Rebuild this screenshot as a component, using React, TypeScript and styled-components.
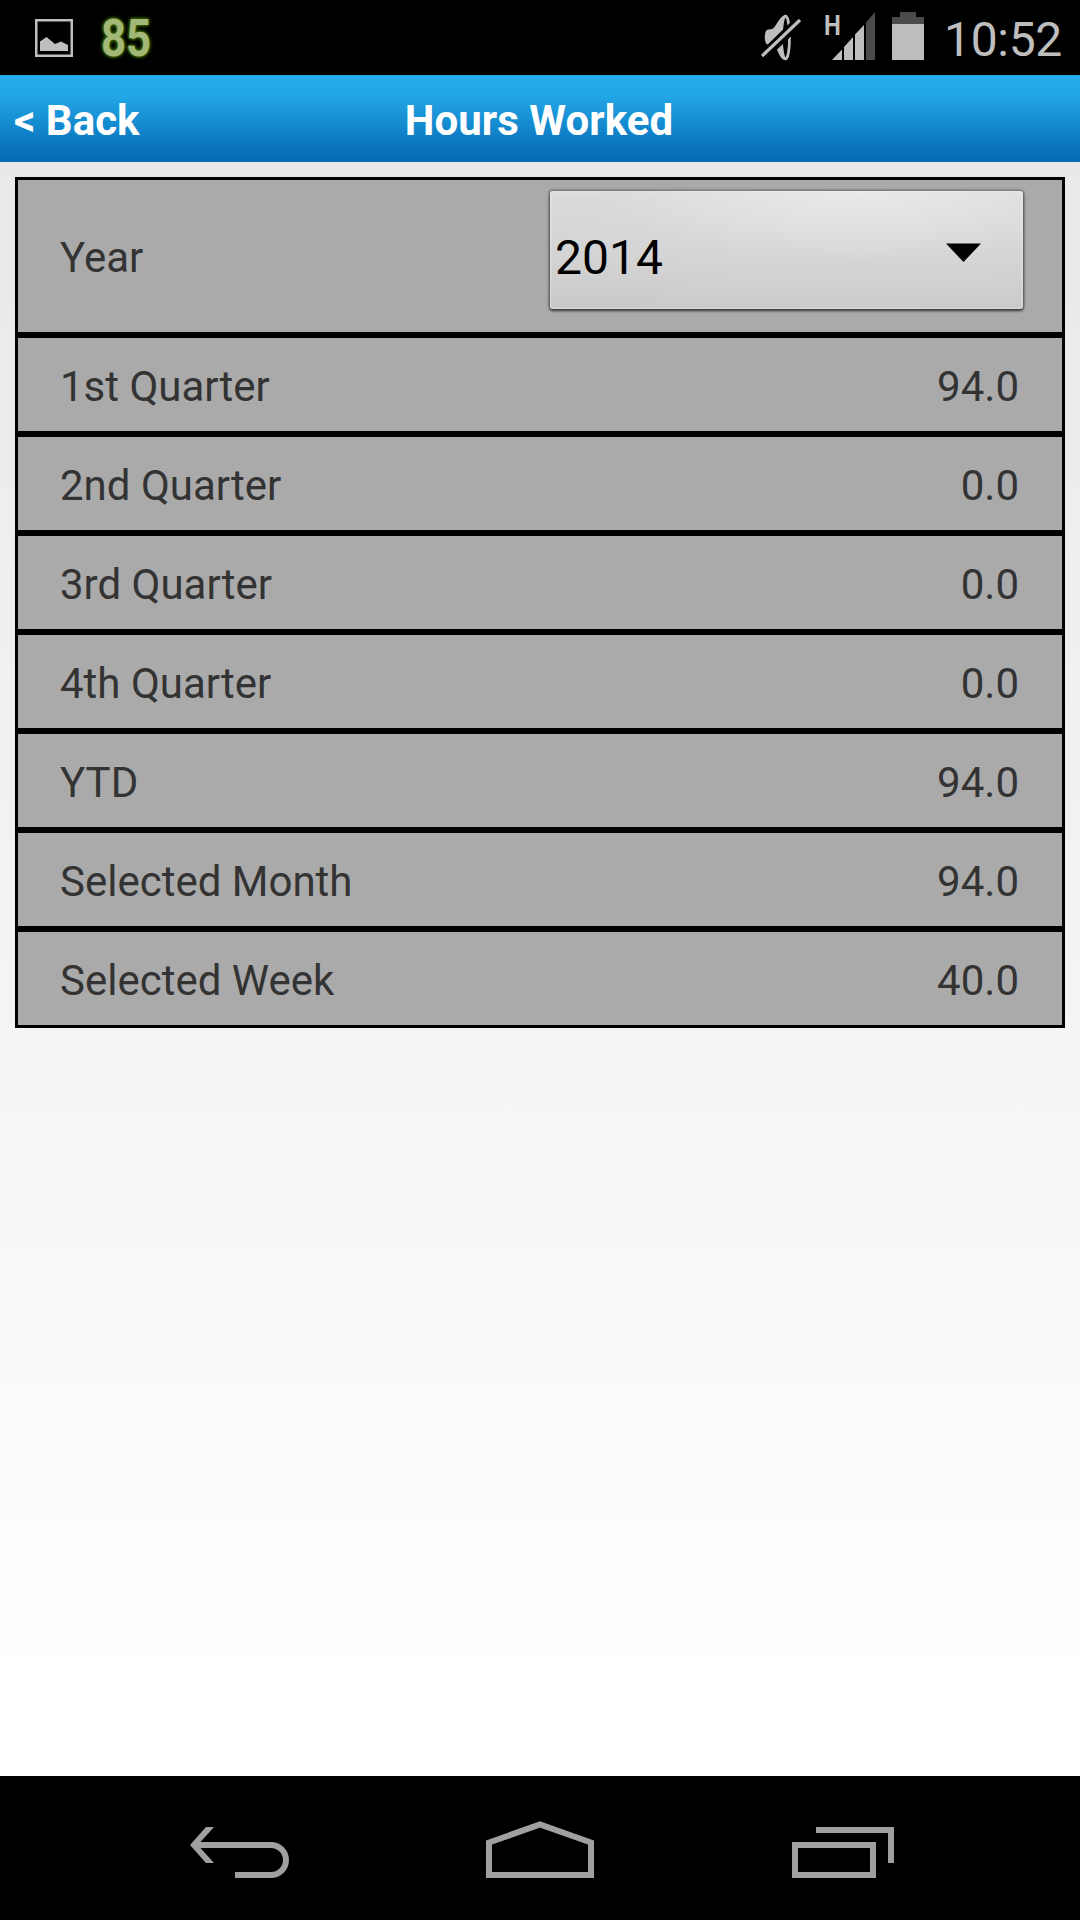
import React from "react";
import styled, { createGlobalStyle } from "styled-components";

const Global = createGlobalStyle`
  body { margin: 0; background: #000; }
  * { box-sizing: border-box; }
`;

const Screen = styled.div`
  display: flex;
  flex-direction: column;
  width: 1080px;
  height: 1920px;
  overflow: hidden;
  font-family: Roboto, "Liberation Sans", sans-serif;
  font-size: 42px;
  color: #333;
`;

const StatusBar = styled.header`
  display: flex;
  align-items: flex-start;
  height: 75px;
  padding: 0 18px 0 35px;
  background: #000;
  color: #bebebe;
`;

const Glyph = styled.svg<{ $top?: number; $left?: number }>`
  display: block;
  flex: none;
  margin-top: ${(p) => p.$top ?? 0}px;
  margin-left: ${(p) => p.$left ?? 0}px;
`;

const BatteryLevel = styled.span`
  width: 60px;
  margin: 8px 0 0 28px;
  font-size: 52px;
  line-height: 61px;
  font-weight: 700;
  color: #a3b776;
  text-shadow: 0 0 2px #376000, 0 0 3px #376000, 0 0 4px #376000, 0 0 5px #376000;
  transform: scaleX(0.84);
  transform-origin: left;
`;

const Spacer = styled.div`
  flex: 1;
`;

const Network = styled.div`
  display: flex;
  width: 52px;
  margin-left: 21px;
`;

const NetworkType = styled.span`
  width: 10px;
  margin-top: 10px;
  font-size: 28px;
  line-height: 31px;
  font-weight: 700;
  transform: scaleX(0.85);
  transform-origin: left;
`;

const Clock = styled.time`
  width: 118px;
  margin: 12px 0 0 20px;
  font-size: 48px;
  line-height: 56px;
  font-weight: 400;
  letter-spacing: -0.3px;
  white-space: nowrap;
  text-align: right;
`;

const TitleBar = styled.nav`
  display: grid;
  grid-template-columns: 1fr auto 1fr;
  align-items: center;
  height: 87px;
  padding: 4px 16px 0 14px;
  background: linear-gradient(#25aeec 0%, #22a6e5 25%, #0b78c1 78%, #056ab5 100%);
  color: #fff;
  font-weight: 700;
`;

const BackLink = styled.a`
  color: inherit;
`;

const Title = styled.h1`
  margin: 0;
  font-size: 42px;
  letter-spacing: 0.05px;
`;

const Content = styled.main`
  flex: 1;
  padding: 15px;
  background: linear-gradient(#e9e9e9, #f5f5f5 55%, #fff 95%);
`;

const Table = styled.section`
  border: solid #000;
  border-width: 0 3px;
  background: #aaa;
`;

const Row = styled.div<{ $tall?: boolean }>`
  display: flex;
  align-items: center;
  justify-content: space-between;
  height: ${(p) => (p.$tall ? 158 : 99)}px;
  padding: ${(p) => (p.$tall ? 0 : 2)}px 43px 0 42px;
  border: solid #000;
  border-width: 3px 0;
`;

const Label = styled.span`
  padding-top: 2px;
`;

const Select = styled.button`
  display: flex;
  align-items: center;
  justify-content: space-between;
  width: 473px;
  height: 118px;
  margin: -12px -4px 0 0;
  padding: 14px 42px 0 5px;
  border: 0;
  border-radius: 3px;
  background: radial-gradient(ellipse 100% 110% at 65% 0, #e9e9e9 0%, rgba(217, 217, 217, 0.5) 55%, rgba(210, 210, 210, 0) 100%),
    linear-gradient(#dcdcdc, #c9c9c9);
  box-shadow: inset 0 0 2px 1px rgba(255, 255, 255, 0.35), 0 0 3px 1px rgba(0, 0, 0, 0.4), 0 2px 3px rgba(0, 0, 0, 0.55);
  color: #000;
  font: 48px Roboto, "Liberation Sans", sans-serif;
`;

const NavBar = styled.footer`
  display: flex;
  align-items: flex-start;
  height: 144px;
  padding: 45px 186px 0 190px;
  background: #000;
`;

const rows = [
  ["1st Quarter", "94.0"],
  ["2nd Quarter", "0.0"],
  ["3rd Quarter", "0.0"],
  ["4th Quarter", "0.0"],
  ["YTD", "94.0"],
  ["Selected Month", "94.0"],
  ["Selected Week", "40.0"],
];

const PictureIcon = () => (
  <Glyph width="38" height="38" $top={19}>
    <path d="M1.25 1.25h35.5v35.5H1.25z" fill="none" stroke="#bebebe" strokeWidth="2.5" />
    <path d="M5 32V22.5L11.5 18 20 25l6-2.5 7 3.5V32z" fill="#bebebe" />
  </Glyph>
);

const MutedIcon = () => (
  <Glyph width="42" height="50" $top={13}>
    <ellipse cx="24.500" cy="24.500" rx="4" ry="21.500" fill="#000" stroke="#bebebe" strokeWidth="2.600" />
    <path
      d="M24 2C18 4 16 12 12 15.500C9 17 7 15.500 5 18C3 22 3.500 29 6 31.500C9 33 12 32 15 35C18 40 19 46 24 47C22 40 21 33 21 24.500C21 16 22 8 24 2z"
      fill="#bebebe"
    />
    <path d="M-2 40 36 3 43 11 5 47z" fill="#000" />
    <path d="M1 43 39 7" stroke="#bebebe" strokeWidth="3.200" />
  </Glyph>
);

const SignalIcon = () => (
  <Glyph width="43" height="48" $top={12} $left={-2}>
    <path d="M0 48 10 37.500V48zM12 35 21 25V48H12zM23 22.500 32 13V48H23z" fill="#bebebe" />
    <path d="M34 10.500 43 0V48H34z" fill="#4b4b4b" />
  </Glyph>
);

const BatteryIcon = () => (
  <Glyph width="32" height="48" $top={12} $left={16}>
    <path d="M0 5H8V0H24V5H32V12H0z" fill="#4b4b4b" />
    <path d="M0 12H32V48H0z" fill="#bebebe" />
  </Glyph>
);

export default function App() {
  return (
    <Screen>
      <Global />
      <StatusBar>
        <PictureIcon />
        <BatteryLevel>85</BatteryLevel>
        <Spacer />
        <MutedIcon />
        <Network>
          <NetworkType>H</NetworkType>
          <SignalIcon />
        </Network>
        <BatteryIcon />
        <Clock>10:52</Clock>
      </StatusBar>
      <TitleBar>
        <BackLink>&lt; Back</BackLink>
        <Title>Hours Worked</Title>
      </TitleBar>
      <Content>
        <Table>
          <Row $tall>
            <Label>Year</Label>
            <Select>
              2014
              <Glyph width="35" height="19" $top={-9}>
                <path d="M0 .5H35L17.500 19z" fill="#000" />
              </Glyph>
            </Select>
          </Row>
          {rows.map(([label, value]) => (
            <Row key={label}>
              <Label>{label}</Label>
              <Label>{value}</Label>
            </Row>
          ))}
        </Table>
      </Content>
      <NavBar>
        <Glyph width="99" height="57">
          <path d="M16 6H24L10.500 21H81A18 18 0 0 1 81 57H45V51H81A12 12 0 0 0 81 27H10.500L24 42H16L0 24z" fill="#a0a0a0" />
        </Glyph>
        <Spacer />
        <Glyph width="108" height="57" $left={-2}>
          <path d="M3 54V21.500L54 3.500 105 21.500V54z" fill="none" stroke="#a0a0a0" strokeWidth="6" />
        </Glyph>
        <Spacer />
        <Glyph width="102" height="57">
          <path d="M3 24H81V54H3zM24 9H99V42" fill="none" stroke="#a0a0a0" strokeWidth="6" />
        </Glyph>
      </NavBar>
    </Screen>
  );
}
